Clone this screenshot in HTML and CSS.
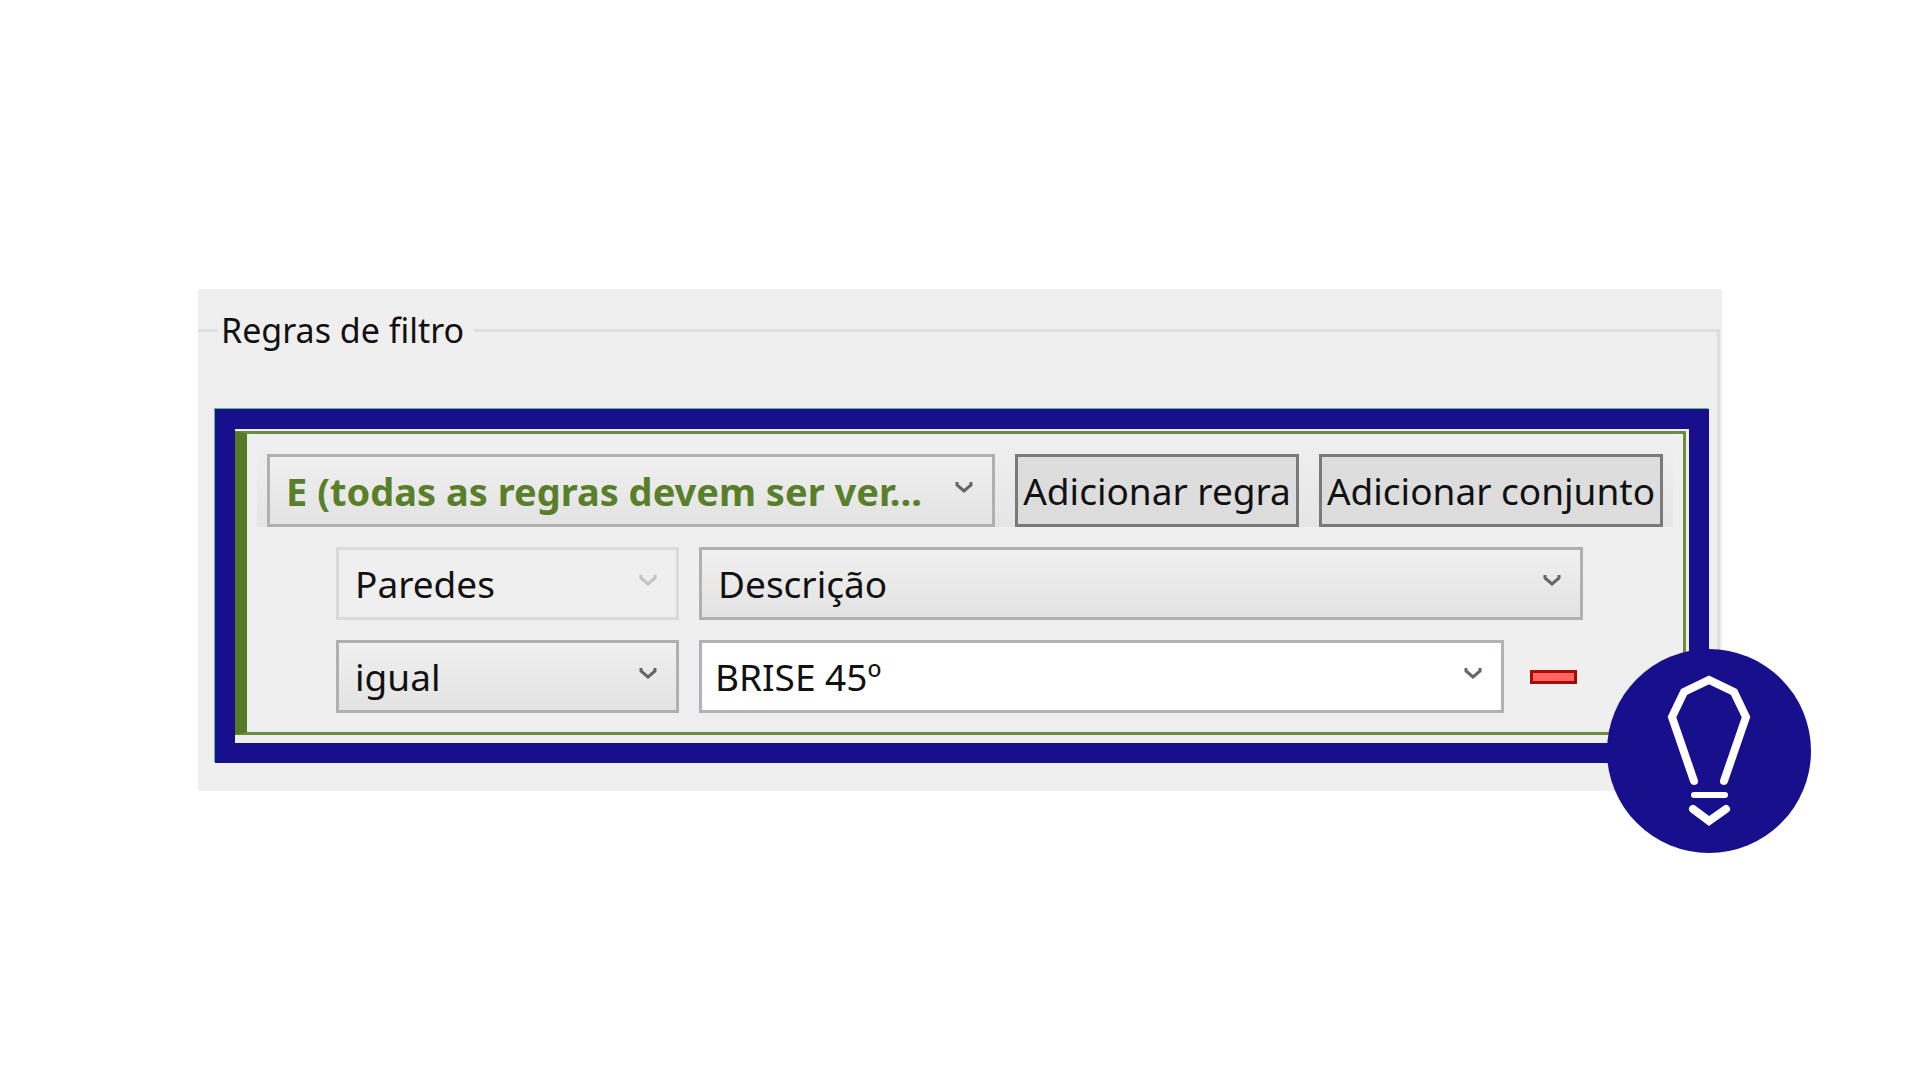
FILE: index.html
```html
<!DOCTYPE html>
<html lang="pt-BR">
<head>
   <meta charset="UTF-8">
   <meta name="viewport" content="width=device-width, initial-scale=1.0">
   <title>Regras de filtro</title>
   <link rel="stylesheet" href="styles.css">
</head>
<body>
   <main class="panel">
      <fieldset class="filter">
         <legend>Regras de filtro</legend>
         <div class="highlight">
            <div class="group">
               <div class="group-header">
                  <div class="combo grow">
                     <select class="operator" aria-label="Operador">
                        <option>E (todas as regras devem ser ver...</option>
                     </select>
                     <svg class="arrow" viewBox="0 0 18 12"><path d="M2 1v3l7 6 7-6V1"/></svg>
                  </div>
                  <button type="button" class="add add-rule">Adicionar regra</button>
                  <button type="button" class="add add-set">Adicionar conjunto</button>
               </div>
               <div class="rule">
                  <div class="combo">
                     <select aria-label="Categoria" disabled>
                        <option>Paredes</option>
                     </select>
                     <svg class="arrow" viewBox="0 0 18 12"><path d="M2 1v3l7 6 7-6V1"/></svg>
                  </div>
                  <div class="combo grow">
                     <select aria-label="Propriedade">
                        <option>Descrição</option>
                     </select>
                     <svg class="arrow" viewBox="0 0 18 12"><path d="M2 1v3l7 6 7-6V1"/></svg>
                  </div>
               </div>
               <div class="rule">
                  <div class="combo">
                     <select aria-label="Condição">
                        <option>igual</option>
                     </select>
                     <svg class="arrow" viewBox="0 0 18 12"><path d="M2 1v3l7 6 7-6V1"/></svg>
                  </div>
                  <div class="combo grow">
                     <select class="value" aria-label="Valor">
                        <option>BRISE 45º</option>
                     </select>
                     <svg class="arrow" viewBox="0 0 18 12"><path d="M2 1v3l7 6 7-6V1"/></svg>
                  </div>
                  <button type="button" class="remove" aria-label="Remover regra">
                     <svg viewBox="0 0 47 14"><rect x="1.5" y="1.5" width="44" height="11"/></svg>
                  </button>
               </div>
            </div>
            <!-- tip badge on the corner of the frame -->
            <div class="tip">
               <svg viewBox="0 0 204 204">
                  <path d="M87 132L65 68L77 43L102 31L127 43L139 68L117 132" stroke-width="8"/>
                  <path d="M87 146H118" stroke-width="6"/>
                  <path d="M86 160L102 172L119 160" stroke-width="8"/>
               </svg>
            </div>
         </div>
      </fieldset>
   </main>
</body>
</html>
```
FILE: styles.css
```css
* {
   box-sizing: border-box;
}

body {
   display: flex;
   align-items: center;
   min-height: 100vh;
   margin: 0;
   padding: 0 198px;
   background: #fff;
   color: #111;
   font-family: "Noto Sans", "Open Sans", sans-serif;
   font-size: 37px;
}

.panel {
   flex: 1;
   min-width: 0;
   padding: 17px 2px 0 0;
   background: #efefef;
}

.filter {
   min-width: 0;
   margin: 0;
   padding: 55px 8px 28px 17px;
   border: solid #dedede;
   border-width: 3px 3px 0 0;
}

legend {
   margin-left: 2px;
   padding: 0 10px 0 4px;
   font-size: 34px;
   line-height: 48px;
}

.highlight {
   position: relative;
   padding: 2px 3px 8px 0;
   border: 20px solid #170f8c;
   box-shadow: -1px -1px 0 #4fbf85;
}

.group {
   display: flex;
   flex-direction: column;
   gap: 20px;
   padding: 0 10px 19px;
   border: 3px solid #698d3f;
   border-left: 12px solid #567a28;
}

.group-header {
   display: flex;
   gap: 20px;
   padding: 20px 10px 0;
   background: linear-gradient(#f0f0f0, #e5e5e5);
}

.rule {
   display: flex;
   gap: 20px;
   padding: 0 90px 0 79px;
}

.combo {
   display: grid;
   align-items: center;
   width: 343px;
}

.combo > * {
   grid-area: 1 / 1;
}

.grow {
   flex: 1;
   min-width: 0;
}

select,
button {
   height: 73px;
   color: inherit;
   font: inherit;
}

select {
   appearance: none;
   width: 100%;
   padding: 0 40px 0 16px;
   border: 3px solid #b0b0b0;
   border-radius: 0;
   background: linear-gradient(#f0f0f0, #e3e3e3);
}

select:disabled {
   border-color: #dadada;
   background: #efefef;
   color: #111;
   opacity: 1;
}

.operator {
   color: #5a7f2b;
   font-size: 38px;
   font-weight: 700;
}

.value {
   padding-left: 13px;
   border-color: #b0b2b8;
   background: #fff;
}

.arrow {
   justify-self: end;
   width: 18px;
   height: 12px;
   margin: 0 22px 8px 0;
   fill: none;
   stroke: #666;
   stroke-width: 3;
   pointer-events: none;
}

select:disabled + .arrow {
   stroke: #c4c4c4;
}

.add {
   padding: 0;
   border: 3px solid #7a7a7a;
   background: #ddd;
   white-space: nowrap;
}

.add-rule {
   width: 284px;
}

.add-set {
   width: 344px;
}

.remove {
   display: flex;
   align-items: center;
   justify-content: center;
   width: 59px;
   padding: 0;
   border: 0;
   background: none;
}

.remove svg {
   width: 47px;
   height: 14px;
   fill: #ff655f;
   stroke: #a30d08;
   stroke-width: 3;
}

.tip {
   position: absolute;
   right: -122px;
   bottom: -110px;
   width: 204px;
   height: 204px;
   border-radius: 50%;
   background: #170f8c;
}

.tip svg {
   display: block;
   fill: none;
   stroke: #fff;
   stroke-linecap: round;
}
```
